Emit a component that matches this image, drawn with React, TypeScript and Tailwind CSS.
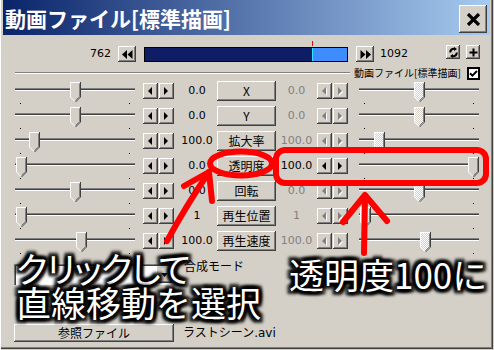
import type { ReactNode } from "react";

const params = [
  { label: "X", left: "0.0", lx: 55, right: "0.0", rx: 55 },
  { label: "Y", left: "0.0", lx: 55, right: "0.0", rx: 55 },
  { label: "拡大率", left: "100.0", lx: 14, right: "100.0", rx: 15 },
  { label: "透明度", left: "0.0", lx: 1, right: "100.0", rx: 109, active: true },
  { label: "回転", left: "0.0", lx: 55, right: "0.0", rx: 55 },
  { label: "再生位置", left: "1", lx: 1, right: "1", rx: 1 },
  { label: "再生速度", left: "100.0", lx: 61, right: "100.0", rx: 61 },
];

const glow =
  "[text-shadow:0_0_2px_#000,3px_0_3px_#000,-3px_0_3px_#000,0_3px_3px_#000,0_-3px_3px_#000,3px_3px_3px_#000,-3px_-3px_3px_#000,3px_-3px_3px_#000,-3px_3px_3px_#000,0_0_6px_#000]";

function Btn({ className = "", children }: { className?: string; children?: ReactNode }) {
  return (
    <div
      className={`flex shrink-0 items-center justify-center bg-[#d4d0c8] shadow-[inset_-1px_-1px_#404040,inset_1px_1px_#fff,inset_-2px_-2px_#808080] ${className}`}
    >
      {children}
    </div>
  );
}

function Tri({ dir, color }: { dir: "l" | "r"; color: string }) {
  const d = dir === "l" ? "M4 0V8L0 4Z" : "M0 0V8L4 4Z";
  return (
    <svg width="5" height="9" viewBox="0 0 5 9">
      {color !== "#000" && <path d={d} transform="translate(1 1)" fill="#fff" />}
      <path d={d} fill={color} />
    </svg>
  );
}

function DoubleTri({ dir }: { dir: "l" | "r" }) {
  return (
    <svg width="11" height="9" viewBox="0 0 11 9">
      {dir === "l" ? (
        <path d="M5 0V9L0 4.5ZM10.5 0V9L5.5 4.5Z" fill="#000" />
      ) : (
        <path d="M0.5 0V9L5.5 4.5ZM6 0V9L11 4.5Z" fill="#000" />
      )}
    </svg>
  );
}

function ArrowPair({ enabled }: { enabled: boolean }) {
  const c = enabled ? "#000" : "#808080";
  return (
    <div className="mt-[3px] flex gap-[1px]">
      <Btn className="h-[16px] w-[15px]">
        <Tri dir="l" color={c} />
      </Btn>
      <Btn className="h-[16px] w-[15px]">
        <Tri dir="r" color={c} />
      </Btn>
    </div>
  );
}

function Thumb({ x, hatch }: { x: number; hatch?: boolean }) {
  return (
    <svg className="absolute top-[2px]" style={{ left: x }} width="11" height="20" viewBox="0 0 11 20">
      <defs>
        <pattern id="dither" width="2" height="2" patternUnits="userSpaceOnUse">
          <rect width="2" height="2" fill="#d4d0c8" />
          <rect width="1" height="1" fill="#fff" />
          <rect x="1" y="1" width="1" height="1" fill="#fff" />
        </pattern>
      </defs>
      <path d="M0 0H11V15L5.5 20.5L0 15Z" fill={hatch ? "url(#dither)" : "#d4d0c8"} />
      <path d="M0.5 15V0.5H10" stroke="#fff" fill="none" />
      <path d="M0.5 15L5 19.5" stroke="#fff" fill="none" />
      <path d="M10.5 0V15L5.5 20" stroke="#404040" fill="none" />
      <path d="M9.5 1.5V14.5L5.5 18.5" stroke="#808080" fill="none" />
    </svg>
  );
}

function Slider({ x, hatch, className = "" }: { x: number; hatch?: boolean; className?: string }) {
  return (
    <div className={`relative h-[25px] w-[120px] shrink-0 ${className}`}>
      <div className="mt-[8px] h-[3px] border-t border-b border-t-[#808080] border-b-white bg-[#404040]" />
      <div className="mt-[12px] flex justify-between px-[5px]">
        <div className="h-[1px] w-[1px] bg-black" />
        <div className="h-[1px] w-[1px] bg-black" />
      </div>
      <Thumb x={x} hatch={hatch} />
    </div>
  );
}

function Checkbox({ className = "" }: { className?: string }) {
  return (
    <div className={`h-[13px] w-[13px] shrink-0 border-2 border-black bg-white ${className}`}>
      <svg width="9" height="9" viewBox="0 0 9 9">
        <path d="M1 4.2L3.4 6.6L8 2" stroke="#000" strokeWidth="2" fill="none" />
      </svg>
    </div>
  );
}

export default function App() {
  return (
    <div className="relative h-[350px] w-[494px] overflow-hidden bg-[#d4d0c8] font-['DejaVu_Sans','Noto_Sans_CJK_JP',sans-serif] text-black shadow-[inset_1px_0_#fff,inset_-1px_-1px_#d4d0c8,inset_-2px_-2px_#404040,inset_-3px_-3px_#808080]">
      {/* title bar */}
      <div className="ml-[3px] mr-[4px] flex h-[35px] items-start justify-between bg-[linear-gradient(to_right,#0a246a,#a6caf0)] pl-[2px] pr-[3px] pt-[5px]">
        <div className="font-['Noto_Sans_CJK_JP',sans-serif] text-[21px] font-bold leading-[26px] text-white">
          動画ファイル[標準描画]
        </div>
        <Btn className="h-[28px] w-[28px]">
          <svg width="15" height="13" viewBox="0 0 15 13">
            <path d="M2 1L13 12M13 1L2 12" stroke="#000" strokeWidth="3.2" />
          </svg>
        </Btn>
      </div>

      {/* frame row */}
      <div className="mt-[8px] flex h-[22px] items-center text-[11px]">
        <div className="w-[111px] text-right">762</div>
        <Btn className="ml-[7px] h-[16px] w-[18px]">
          <DoubleTri dir="l" />
        </Btn>
        <div className="relative ml-[8px] flex h-[15px] w-[204px] border border-black bg-[#0e1d66]">
          <div className="flex-1" />
          <div className="w-[1px] bg-[#2ee6ff]" />
          <div className="w-[34px] bg-[#3e8cff]" />
          <div className="absolute -top-[7px] left-[167px] h-[5px] w-[1px] bg-[#d01010]" />
        </div>
        <Btn className="ml-[8px] h-[16px] w-[18px]">
          <DoubleTri dir="r" />
        </Btn>
        <div className="ml-[6px]">1092</div>
        <Btn className="ml-auto mr-[6px] mt-[2px] h-[14px] w-[14px] self-start">
          <svg width="9" height="11" viewBox="0 0 9 11">
            <path d="M1.2 5.5C1.2 3 3 1.6 5.5 1.8" stroke="#000" strokeWidth="2" fill="none" />
            <path d="M5 0L8 2L5 4Z" fill="#000" />
            <path d="M7.8 5.5C7.8 8 6 9.4 3.5 9.2" stroke="#000" strokeWidth="2" fill="none" />
            <path d="M4 7L1 9L4 11Z" fill="#000" />
          </svg>
        </Btn>
        <Btn className="mr-[14px] mt-[2px] h-[14px] w-[14px] self-start">
          <svg width="9" height="9" viewBox="0 0 9 9">
            <path d="M4.5 0.5V8.5M0.5 4.5H8.5" stroke="#000" strokeWidth="2" />
          </svg>
        </Btn>
      </div>

      {/* layer label row */}
      <div className="mt-[1px] flex h-[14px] items-center">
        <div className="ml-[15px] h-[2px] w-[335px] border-t border-b border-t-[#808080] border-b-white" />
        <div className="ml-[4px] font-['Noto_Sans_CJK_JP',sans-serif] text-[10px] leading-[14px]">
          動画ファイル[標準描画]
        </div>
        <Checkbox className="ml-auto mr-[14px]" />
      </div>

      {/* parameter rows */}
      {params.map((p) => (
        <div key={p.label} className="flex h-[25px] items-start text-[11px]">
          <Slider className="ml-[15px]" x={p.lx} />
          <div className="ml-[8px]">
            <ArrowPair enabled />
          </div>
          <div className="mt-[1px] h-[20px] w-[43px] pl-[3px] text-center leading-[20px]">{p.left}</div>
          <Btn className="mt-[1px] h-[20px] w-[59px] font-['Noto_Sans_CJK_JP',sans-serif] text-[12px]">
            {p.label}
          </Btn>
          <div
            className={`mt-[1px] h-[20px] w-[41px] text-center leading-[20px] ${
              p.active ? "text-black" : "text-[#808080]"
            }`}
          >
            {p.right}
          </div>
          <ArrowPair enabled={!!p.active} />
          <Slider className="ml-[11px]" x={p.rx} hatch={!p.active} />
        </div>
      ))}

      {/* blend mode */}
      <div className="flex h-[30px] items-start">
        <div className="ml-[14px] mt-[9px] flex h-[21px] w-[160px] items-center justify-end bg-white pr-[2px] shadow-[inset_1px_1px_#808080,inset_2px_2px_#404040,inset_-1px_-1px_#fff]">
          <Btn className="h-[17px] w-[16px]">
            <svg width="7" height="4" viewBox="0 0 7 4">
              <path d="M0 0H7L3.5 4Z" fill="#000" />
            </svg>
          </Btn>
        </div>
        <div className="ml-[10px] mt-[3px] font-['Noto_Sans_CJK_JP',sans-serif] text-[12px] leading-[16px]">
          合成モード
        </div>
      </div>
      <div className="h-[39px]" />

      {/* reference file */}
      <div className="flex items-center font-['Noto_Sans_CJK_JP',sans-serif] text-[12px]">
        <Btn className="ml-[14px] h-[18px] w-[160px]">参照ファイル</Btn>
        <div className="ml-[9px] font-['DejaVu_Sans','Noto_Sans_CJK_JP',sans-serif]">ラストシーン.avi</div>
      </div>

      {/* annotations */}
      <svg className="pointer-events-none absolute inset-0" width="494" height="350" viewBox="0 0 494 350">
        <g fill="none" stroke="#ff0000" strokeWidth="6" strokeLinecap="round" strokeLinejoin="round">
          <ellipse cx="241" cy="163.5" rx="31" ry="12" />
          <rect x="276" y="150" width="210" height="33" rx="9" />
          <path d="M167 241Q186 206 209 172" />
          <path d="M184 186L209 172L212 201" />
          <path d="M364 253L365 196" />
          <path d="M343 222L365 195L387 221" />
        </g>
      </svg>
      <div
        className={`absolute left-[16px] top-[250px] font-['Noto_Sans_CJK_JP',sans-serif] text-[35px] leading-[35px] text-white ${glow}`}
      >
        <div className="tracking-[-1px] [font-feature-settings:'palt']">クリックして</div>
        <div className="leading-[34px]">直線移動を選択</div>
      </div>
      <div
        className={`absolute left-[289px] top-[256px] font-['Noto_Sans_CJK_JP',sans-serif] text-[35px] leading-[35px] text-white ${glow}`}
      >
        透明度100に
      </div>
    </div>
  );
}
